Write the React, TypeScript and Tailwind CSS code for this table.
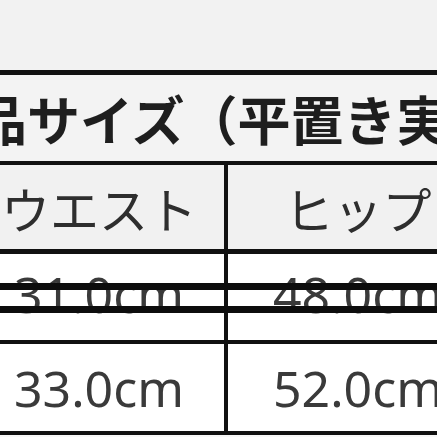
const jp = { fontFamily: '"Noto Sans CJK JP", "Noto Sans", sans-serif' };
const latin = { fontFamily: '"Noto Sans", "Noto Sans CJK JP", sans-serif' };

function Row({
  left,
  right,
  height,
  bg,
  className,
  style,
}: {
  left: string;
  right: string;
  height: string;
  bg: string;
  className: string;
  style: React.CSSProperties;
}) {
  return (
    <div className={`flex ${height} ${bg} ml-[-26px]`}>
      <div className={`w-[250px] flex-none flex items-center justify-center whitespace-nowrap ${className}`} style={style}>
        {left}
      </div>
      <div className="w-[4px] flex-none bg-[#111]" />
      <div className={`w-[260px] flex-none flex items-center justify-center whitespace-nowrap ${className}`} style={style}>
        {right}
      </div>
    </div>
  );
}

export default function App() {
  return (
    <div className="w-[437px] h-[437px] overflow-hidden bg-[#f2f2f2] flex flex-col">
      <div className="h-[70px] flex-none bg-[#f2f2f2]" />
      <div className="h-[5px] flex-none bg-[#111]" />

      {/* title row */}
      <div className="h-[86px] flex-none flex items-center bg-[#f3f3f3] overflow-hidden">
        <span
          className="ml-[-79px] flex-none whitespace-nowrap text-[53px] font-bold text-[#1e1e1e] leading-none"
          style={jp}
        >
          商品サイズ（平置き実測）
        </span>
      </div>
      <div className="h-[4px] flex-none bg-[#111]" />

      <Row
        left="ウエスト"
        right="ヒップ"
        height="h-[84px] flex-none"
        bg="bg-[#f1f1f1]"
        className="text-[49px] text-[#2e2e2e] leading-none"
        style={jp}
      />
      <div className="h-[5px] flex-none bg-[#111]" />

      <div className="relative flex-none">
        <Row
          left="31.0cm"
          right="48.0cm"
          height="h-[86px]"
          bg="bg-white"
          className="text-[50px] text-[#3a3a3a] leading-none pb-[6px]"
          style={latin}
        />
        <div className="absolute left-0 right-0 top-[29px] h-[7px] bg-[#0d0d0d]" />
        <div className="absolute left-0 right-0 top-[52px] h-[7px] bg-[#0d0d0d]" />
      </div>
      <div className="h-[4px] flex-none bg-[#111]" />

      <Row
        left="33.0cm"
        right="52.0cm"
        height="h-[87px] flex-none"
        bg="bg-white"
        className="text-[50px] text-[#3a3a3a] leading-none"
        style={latin}
      />
      <div className="h-[4px] flex-none bg-[#111]" />
      <div className="flex-1 bg-[#f7f7f7]" />
    </div>
  );
}
